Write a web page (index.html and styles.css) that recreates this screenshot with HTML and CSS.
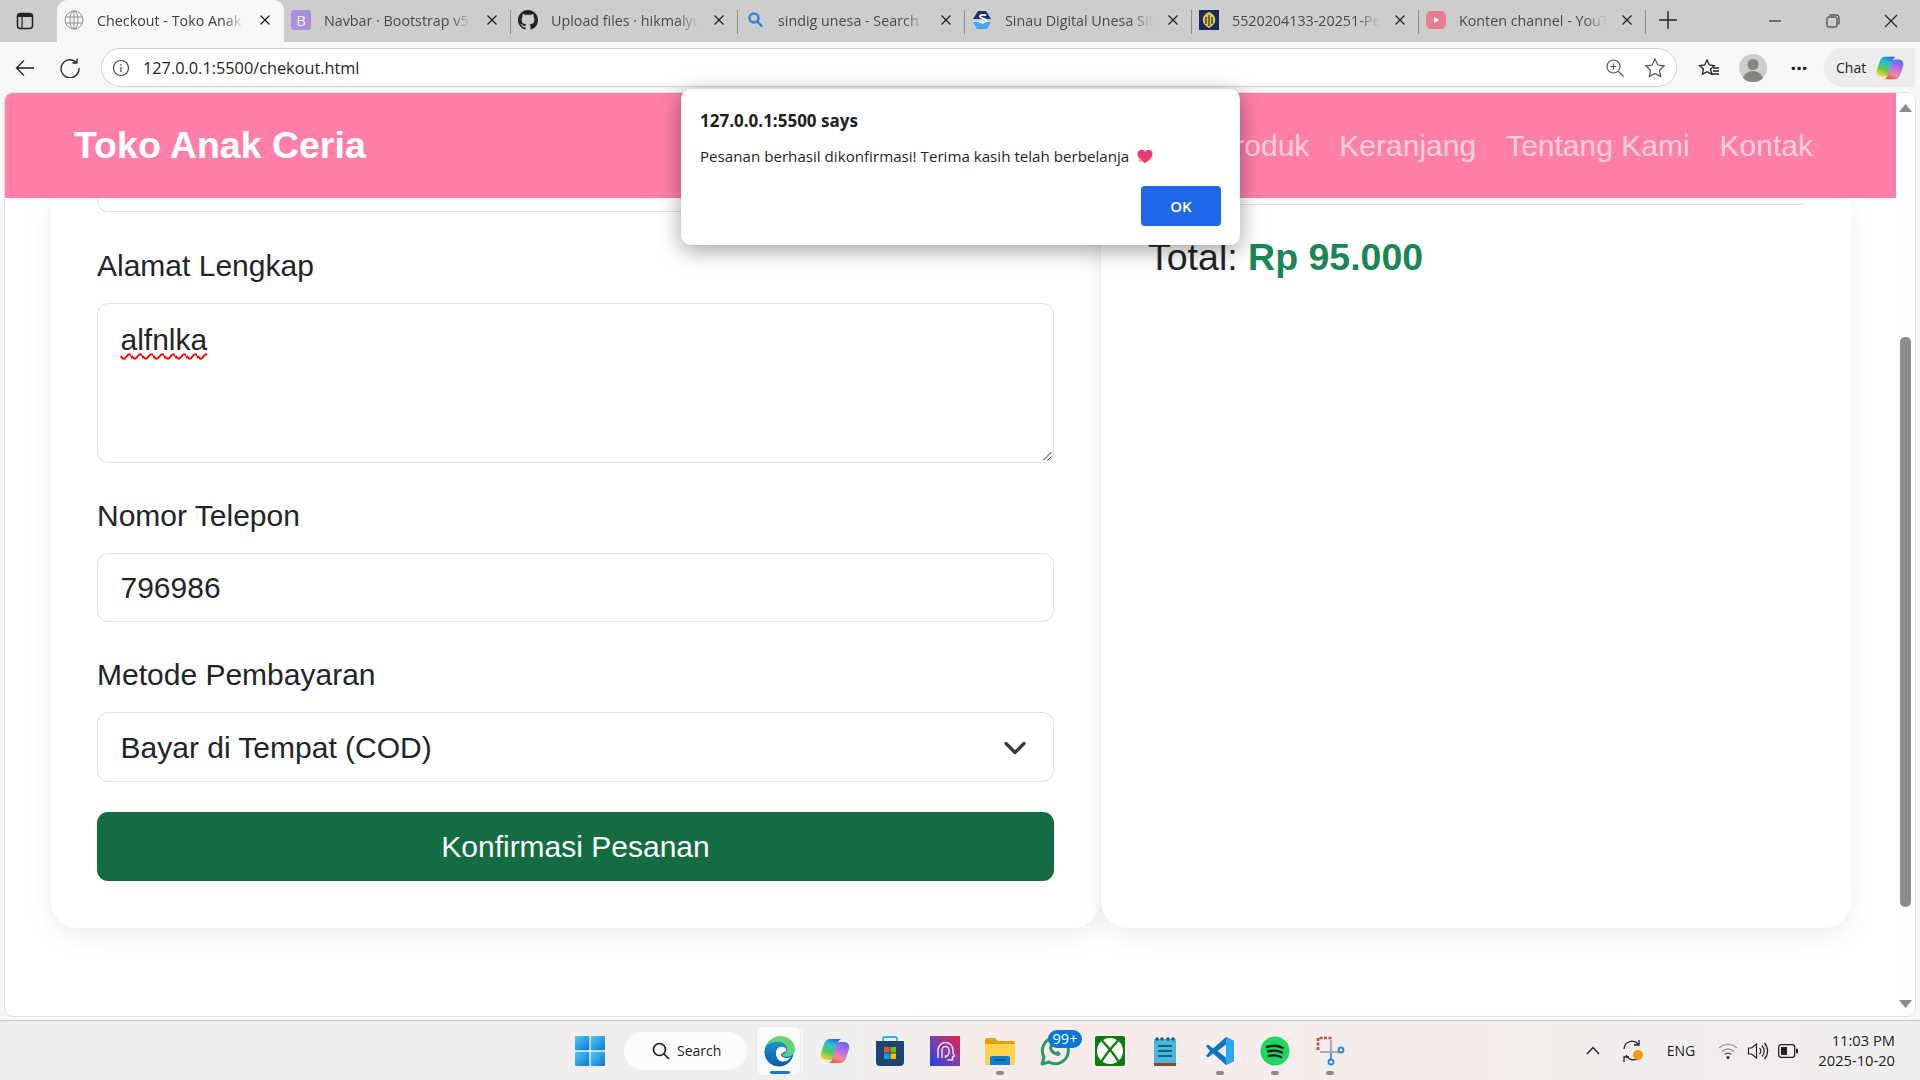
FILE: index.html
```html
<!DOCTYPE html>
<html lang="en">
<head>
  <meta charset="UTF-8">
  <meta name="viewport" content="width=device-width, initial-scale=1.0">
  <title>Checkout - Toko Anak Ceria</title>
  <link rel="stylesheet" href="styles.css">
</head>
<body>

<svg class="defs" width="0" height="0" aria-hidden="true">
  <defs>
    <linearGradient id="copA" x1=".7" y1="0" x2=".3" y2="1">
      <stop offset="0" stop-color="#1f6fe0"/><stop offset=".3" stop-color="#28c0d8"/><stop offset=".65" stop-color="#58c850"/><stop offset="1" stop-color="#f6d23c"/>
    </linearGradient>
    <linearGradient id="copB" x1=".3" y1="1" x2=".7" y2="0">
      <stop offset="0" stop-color="#5a6cf0"/><stop offset=".45" stop-color="#c46ee6"/><stop offset=".75" stop-color="#f08aa0"/><stop offset="1" stop-color="#f0583a"/>
    </linearGradient>
    <linearGradient id="edgeA" x1="0" y1="0" x2="0" y2="1">
      <stop offset="0" stop-color="#1b9de2"/><stop offset="1" stop-color="#0c59a4"/>
    </linearGradient>
    <linearGradient id="edgeB" x1="0" y1="1" x2="1" y2="0">
      <stop offset="0" stop-color="#30c5c0"/><stop offset="1" stop-color="#7ed957"/>
    </linearGradient>
    <linearGradient id="winG" x1="0" y1="0" x2="1" y2="1">
      <stop offset="0" stop-color="#4fc8f8"/><stop offset="1" stop-color="#0a78d4"/>
    </linearGradient>
    <linearGradient id="purpleG" x1="0" y1="1" x2="1" y2="0">
      <stop offset="0" stop-color="#1f45e0"/><stop offset=".55" stop-color="#8a3aa8"/><stop offset="1" stop-color="#f0203a"/>
    </linearGradient>
    <symbol id="copilot" viewBox="0 0 32 32">
      <path d="M11 4C8 4 6 6 5 9L2 18C1 22 3 25 7 25H11C13 25 14 24 14.500 22L18 10C18.700 7 20 5 22 4Z" fill="url(#copA)"/>
      <path d="M11 4C8 4 6 6 5 9L2 18C1 22 3 25 7 25H11C13 25 14 24 14.500 22L18 10C18.700 7 20 5 22 4Z" fill="url(#copB)" transform="rotate(180 16 16)"/>
    </symbol>
    <symbol id="close-x" viewBox="0 0 12 12">
      <path d="M1.500 1.500l9 9M10.500 1.500l-9 9" fill="none" stroke="#222" stroke-width="1.300"/>
    </symbol>
  </defs>
</svg>

<div class="screen">

  <div class="tabstrip">
    <div class="strip-btn">
      <svg width="18" height="18" viewBox="0 0 18 18"><rect x="1.500" y="1.500" width="15" height="15" rx="3" fill="none" stroke="#222" stroke-width="1.500"/><path d="M1.500 5h15V4a2.500 2.500 0 0 0-2.500-2.500H4A2.500 2.500 0 0 0 1.500 4z" fill="#222"/><path d="M6 5v11" stroke="#222" stroke-width="1.200"/></svg>
    </div>

    <div class="tab tab-active">
      <svg class="favicon" viewBox="0 0 20 20" fill="none" stroke="#8f8f8f"><circle cx="10" cy="10" r="9"/><ellipse cx="10" cy="10" rx="4" ry="9"/><path d="M1.500 7h17M1.500 13h17M10 1v18"/></svg>
      <span class="tab-title">Checkout - Toko Anak Ceria</span>
      <svg class="tab-close"><use href="#close-x"/></svg>
    </div>
    <div class="tab tab-sep">
      <span class="favicon fav-bs">B</span>
      <span class="tab-title">Navbar · Bootstrap v5.3</span>
      <svg class="tab-close"><use href="#close-x"/></svg>
    </div>
    <div class="tab tab-sep">
      <svg class="favicon" viewBox="0 0 16 16"><path fill="#1f2328" d="M8 0C3.580 0 0 3.580 0 8c0 3.540 2.290 6.530 5.470 7.590.4.070.55-.17.55-.38 0-.19-.01-.82-.01-1.490-2.010.37-2.530-.49-2.690-.94-.09-.23-.48-.94-.82-1.130-.28-.15-.68-.52-.01-.53.63-.01 1.080.58 1.230.82.72 1.210 1.870.87 2.330.66.07-.52.28-.87.51-1.070-1.780-.2-3.640-.89-3.640-3.950 0-.87.31-1.590.82-2.150-.08-.2-.36-1.020.08-2.120 0 0 .67-.21 2.200.82.64-.18 1.320-.27 2-.27.68 0 1.360.09 2 .27 1.530-1.040 2.200-.82 2.200-.82.44 1.100.16 1.920.08 2.120.51.56.82 1.270.82 2.150 0 3.070-1.870 3.750-3.650 3.950.29.25.54.73.54 1.480 0 1.070-.01 1.930-.01 2.200 0 .21.15.46.55.38A8.013 8.013 0 0 0 16 8c0-4.420-3.580-8-8-8z"/></svg>
      <span class="tab-title">Upload files · hikmalyuliansyah</span>
      <svg class="tab-close"><use href="#close-x"/></svg>
    </div>
    <div class="tab tab-sep">
      <svg class="favicon" viewBox="0 0 20 20" fill="none" stroke="#2a86d6" stroke-width="2.400"><circle cx="9" cy="8" r="4.500"/><path d="M12.500 11.500l4 4.500" stroke-linecap="round"/></svg>
      <span class="tab-title">sindig unesa - Search</span>
      <svg class="tab-close"><use href="#close-x"/></svg>
    </div>
    <div class="tab tab-sep">
      <svg class="favicon" viewBox="0 0 20 20"><path d="M6 1h8l5 8H1z" fill="#1c2f73"/><path d="M1 12h18l-4 7H5z" fill="#4aa3f0"/><path d="M14 5.500c-1-1-6-1-6 1s6 1.500 6 4-5 2.500-7 1" fill="none" stroke="#fff" stroke-width="1.800"/></svg>
      <span class="tab-title">Sinau Digital Unesa SiDIA</span>
      <svg class="tab-close"><use href="#close-x"/></svg>
    </div>
    <div class="tab tab-sep">
      <svg class="favicon" viewBox="0 0 20 20"><rect width="20" height="20" fill="#17295f"/><path d="M10 2c5 2 7 6 6 10-1 3-4 5-6 6-2-1-5-3-6-6C3 8 5 4 10 2z" fill="#e5c53a"/><path d="M10 5v11M7 7v7M13 7v7" stroke="#17295f" stroke-width="1.200"/></svg>
      <span class="tab-title">5520204133-20251-Pemrograman</span>
      <svg class="tab-close"><use href="#close-x"/></svg>
    </div>
    <div class="tab tab-sep">
      <svg class="favicon" viewBox="0 0 20 20"><rect y="1" width="20" height="18" rx="5" fill="#e87d93"/><path d="M8 7l5 3-5 3z" fill="#fff"/></svg>
      <span class="tab-title">Konten channel - YouTube</span>
      <svg class="tab-close"><use href="#close-x"/></svg>
    </div>

    <div class="strip-new">
      <svg width="18" height="18" viewBox="0 0 18 18"><path d="M9 0v18M0 9h18" stroke="#222" stroke-width="1.400"/></svg>
    </div>

    <div class="win-controls">
      <div class="win-btn"><svg width="14" height="14" viewBox="0 0 14 14"><path d="M1 7h12" stroke="#222" stroke-width="1.100"/></svg></div>
      <div class="win-btn"><svg width="14" height="14" viewBox="0 0 14 14" fill="none" stroke="#222"><rect x="1" y="3" width="10" height="10" rx="1.500"/><path d="M3.500 1h7A2.500 2.500 0 0 1 13 3.500v7"/></svg></div>
      <div class="win-btn"><svg width="14" height="14" viewBox="0 0 14 14"><path d="M1 1l12 12M13 1L1 13" stroke="#222" stroke-width="1.100"/></svg></div>
    </div>
  </div>

  <div class="toolbar">
    <div class="tool-btn tool-back">
      <svg width="20" height="18" viewBox="0 0 20 18" fill="none" stroke="#222" stroke-width="1.300"><path d="M19 9H1.500M9 1.500L1.500 9 9 16.500"/></svg>
    </div>
    <div class="tool-btn">
      <svg width="20" height="20" viewBox="0 0 20 20" fill="none" stroke="#222" stroke-width="1.300"><path d="M16.500 4.500A9 9 0 1 0 19 10"/><path d="M17 .5v4.500h-4.500"/></svg>
    </div>

    <div class="addressbar">
      <svg class="addr-info" width="18" height="18" viewBox="0 0 18 18" fill="none" stroke="#444" stroke-width="1.200"><circle cx="9" cy="9" r="7.500"/><path d="M9 8v5M9 5v1.500"/></svg>
      <span class="addr-url">127.0.0.1:5500/chekout.html</span>
      <div class="addr-icons">
        <svg width="20" height="20" viewBox="0 0 20 20" fill="none" stroke="#555" stroke-width="1.200"><circle cx="8.500" cy="8.500" r="6.500"/><path d="M13.500 13.500l5 5M8.500 5.500v6M5.500 8.500h6"/></svg>
        <svg width="22" height="22" viewBox="0 0 22 22" fill="none" stroke="#555" stroke-width="1.200"><path d="M11 2l2.800 6 6.400.8-4.700 4.400 1.200 6.400L11 16.400l-5.700 3.200 1.200-6.400L1.800 8.800 8.200 8z"/></svg>
      </div>
    </div>

    <div class="tool-btn tool-fav">
      <svg width="22" height="20" viewBox="0 0 22 20" fill="none" stroke="#222" stroke-width="1.300"><path d="M9 2l2.300 5 5 .7-3.700 3.400 1 5.200L9 13.700l-4.600 2.600 1-5.200L1.700 7.700l5-.7z"/><path d="M15 10h6M15 13h6M14 16h7"/></svg>
    </div>
    <div class="tool-btn">
      <svg width="28" height="28" viewBox="0 0 28 28"><circle cx="14" cy="14" r="14" fill="#cfcdc9"/><circle cx="14" cy="10.500" r="5.500" fill="#858480"/><path d="M4 24c2-5 6-7 10-7s8 2 10 7c-3 3-6 4-10 4s-7-1-10-4z" fill="#858480"/></svg>
    </div>
    <div class="tool-btn tool-dots">···</div>
    <div class="chat-pill">
      <span>Chat</span>
      <svg width="30" height="30"><use href="#copilot"/></svg>
    </div>
  </div>

  <div class="viewport">
    <div class="page">
      <nav class="navbar">
        <a class="brand">Toko Anak Ceria</a>
        <div class="nav-links">
          <a>Beranda</a>
          <a>Produk</a>
          <a>Keranjang</a>
          <a>Tentang Kami</a>
          <a>Kontak</a>
        </div>
      </nav>

      <div class="checkout">
        <section class="card">
          <div class="field-stub"></div>

          <label class="field-label">Alamat Lengkap</label>
          <div class="field-control field-area">
            <span class="misspelled">alfnlka</span>
            <svg class="resize-grip" width="10" height="10" viewBox="0 0 10 10"><path d="M9.500 1L1 9.500M9.500 5.500L5.500 9.500" stroke="#333" stroke-width="1"/></svg>
          </div>

          <label class="field-label">Nomor Telepon</label>
          <input class="field-control" type="text" value="796986">

          <label class="field-label">Metode Pembayaran</label>
          <div class="select-wrap">
            <select class="field-control">
              <option>Bayar di Tempat (COD)</option>
            </select>
            <svg class="select-arrow" width="22" height="14" viewBox="0 0 22 14" fill="none" stroke="#343a40" stroke-width="3.200" stroke-linecap="round" stroke-linejoin="round"><path d="M2 2.500l9 9 9-9"/></svg>
          </div>

          <button class="btn-confirm">Konfirmasi Pesanan</button>
        </section>

        <aside class="card">
          <div class="summary-rule"></div>
          <h4 class="summary-total">Total: <strong>Rp 95.000</strong></h4>
        </aside>
      </div>
    </div>

    <div class="scrollbar">
      <svg width="13" height="8" viewBox="0 0 13 8"><path d="M6.500 0L13 8H0z" fill="#8a8a8a"/></svg>
      <div class="scroll-thumb"></div>
      <svg class="scroll-down" width="13" height="8" viewBox="0 0 13 8"><path d="M6.500 8L13 0H0z" fill="#8a8a8a"/></svg>
    </div>
  </div>

  <div class="taskbar">
    <div class="win-logo">
      <svg width="30" height="30" viewBox="0 0 30 30" fill="url(#winG)"><rect width="14.300" height="14.300" rx="1"/><rect x="15.700" width="14.300" height="14.300" rx="1"/><rect y="15.700" width="14.300" height="14.300" rx="1"/><rect x="15.700" y="15.700" width="14.300" height="14.300" rx="1"/></svg>
    </div>
    <div class="task-search">
      <svg width="18" height="18" viewBox="0 0 18 18" fill="none" stroke="#1c1c1c" stroke-width="1.700"><circle cx="7.500" cy="7.500" r="6"/><path d="M12 12l5 5"/></svg>
      <span>Search</span>
    </div>

    <div class="task-btn task-active">
      <svg width="32" height="32" viewBox="0 0 32 32">
        <circle cx="15" cy="17" r="14.500" fill="url(#edgeA)"/>
        <path d="M1.500 13C4 5 10 1 16 1c9 0 15 6 15 13 0 5-4 8-8 8-3 0-5-1-5-3 3 0 5-2 5-5 0-4-4-7-9-7-6 0-11 2-13.500 6z" fill="url(#edgeB)"/>
        <path d="M12 18c0-4 3-7 7-6 2 .5 4 2 3 4-1 1.500-4 1-5 3-.5 2 2 4 6 4 2 0 3-.5 4-1-2 3-6 5-9 4.500-4-.5-6-4.500-6-8.500z" fill="#fff"/>
      </svg>
      <span class="task-bar"></span>
    </div>
    <div class="task-btn">
      <svg width="32" height="32"><use href="#copilot"/></svg>
    </div>
    <div class="task-btn">
      <svg width="30" height="30" viewBox="0 0 30 30"><path d="M8 7V3a2 2 0 0 1 2-2h10a2 2 0 0 1 2 2v4" fill="none" stroke="#27b5e8" stroke-width="1.800"/><path d="M1 5h28v21a4 4 0 0 1-4 4H5a4 4 0 0 1-4-4z" fill="#1c4475"/><rect x="9" y="11" width="5.500" height="5.500" fill="#f25022"/><rect x="15.500" y="11" width="5.500" height="5.500" fill="#7fba00"/><rect x="9" y="17.500" width="5.500" height="5.500" fill="#00a4ef"/><rect x="15.500" y="17.500" width="5.500" height="5.500" fill="#ffb900"/></svg>
    </div>
    <div class="task-btn">
      <svg width="30" height="30" viewBox="0 0 30 30"><rect width="30" height="30" fill="url(#purpleG)"/><path d="M8 22v-8a7.500 7.500 0 0 1 15 0v3l1.500 3-2 1v3h-5" fill="none" stroke="#f2dce8" stroke-width="1.500"/><path d="M12 22v-8a3.500 3.500 0 0 1 7 0v3l-1.500 3h-2v2" fill="none" stroke="#f2dce8" stroke-width="1.500"/></svg>
    </div>
    <div class="task-btn">
      <svg width="30" height="28" viewBox="0 0 30 28"><path d="M0 3a2 2 0 0 1 2-2h8l3 3h15a2 2 0 0 1 2 2v6H0z" fill="#e0a106"/><path d="M0 7h30v19a2 2 0 0 1-2 2H2a2 2 0 0 1-2-2z" fill="#ffd24d"/><path d="M5 26a5 5 0 0 1 0-.5V21a2 2 0 0 1 2-2h16a2 2 0 0 1 2 2v7H5z" fill="#0f7fd4"/><path d="M10 23h10" stroke="#083e6d" stroke-width="1.500"/></svg>
      <span class="task-dot"></span>
    </div>
    <div class="task-btn">
      <svg width="32" height="32" viewBox="0 0 32 32" fill="none"><path d="M3 29l2-7a13 13 0 1 1 5 5z" stroke="#2a9a60" stroke-width="3" stroke-linejoin="round"/><path d="M11 10c-2 3 0 7 3 9 3 2 6 3 8 0l-3-3-2 1c-2-1-3-2-4-4l1-2-2-2z" fill="#2a9a60"/></svg>
      <span class="task-badge">99+</span>
    </div>
    <div class="task-btn">
      <svg width="30" height="30" viewBox="0 0 30 30"><rect width="30" height="30" rx="2" fill="#107c10"/><circle cx="15" cy="15" r="13" fill="#fff"/><path d="M7 4.500C10 8 19 17 24 26.500M23 4.500C20 8 11 17 6 26.500" stroke="#107c10" stroke-width="2.400" fill="none"/></svg>
    </div>
    <div class="task-btn">
      <svg width="22" height="30" viewBox="0 0 22 30"><rect y="3" width="22" height="25" rx="1" fill="#4ab6dc"/><rect y="27" width="22" height="3" fill="#8a4b1a"/><circle cx="3" cy="3" r="1.800" fill="#17607f"/><circle cx="8" cy="3" r="1.800" fill="#17607f"/><circle cx="14" cy="3" r="1.800" fill="#17607f"/><circle cx="19" cy="3" r="1.800" fill="#17607f"/><path d="M4 10h14M4 15h14M4 20h14" stroke="#17607f" stroke-width="1.800"/></svg>
    </div>
    <div class="task-btn">
      <svg width="30" height="30" viewBox="0 0 30 30"><path fill-rule="evenodd" d="M21 1L29 5V25L21 29L8 17.500L3 21.500L1 20L5 15L1 10L3 8.500L8 12.500ZM21 8.500L12.500 15L21 21.500Z" fill="#0a74c4"/><path d="M21 1L29 5V25L21 29Z" fill="#2aa7ef"/></svg>
      <span class="task-dot"></span>
    </div>
    <div class="task-btn">
      <svg width="30" height="30" viewBox="0 0 30 30" fill="none"><circle cx="15" cy="15" r="14.500" fill="#1ed760"/><path d="M7 11c6-2 11-1.500 16 1M8 15.500c5-1.500 10-1 14 1M9 20c4-1 8-.8 12 1" stroke="#1a1a1a" stroke-width="2.400" stroke-linecap="round"/></svg>
      <span class="task-dot"></span>
    </div>
    <div class="task-btn">
      <svg width="30" height="32" viewBox="0 0 30 32" fill="none"><path d="M3 15V3h14" stroke="#d8442c" stroke-width="2.600" stroke-dasharray="3 1.500"/><path d="M16 5v13M5 17h19" stroke="#a8aab0" stroke-width="2.200"/><circle cx="26" cy="15" r="2.500" stroke="#1e8fe0" stroke-width="1.800"/><circle cx="16" cy="27" r="2.500" stroke="#1e8fe0" stroke-width="1.800"/><path d="M16 24v-6" stroke="#1e8fe0" stroke-width="1.800"/></svg>
      <span class="task-dot"></span>
    </div>

    <div class="tray">
      <div class="tray-item tray-wide">
        <svg width="14" height="9" viewBox="0 0 14 9" fill="none" stroke="#222" stroke-width="1.500"><path d="M1 8l6-6.500L13 8"/></svg>
      </div>
      <div class="tray-item tray-wide">
        <svg width="22" height="24" viewBox="0 0 22 24" fill="none" stroke="#222" stroke-width="1.300"><path d="M2 10a8 8 0 0 1 14-5M17 1v5h-5M15 20a8 8 0 0 1-11-4M2 23v-5h5"/><circle cx="16" cy="16" r="5" fill="#f59a0c" stroke="none"/></svg>
      </div>
      <div class="tray-item tray-lang">ENG</div>
      <div class="tray-item">
        <svg width="20" height="18" viewBox="0 0 20 18" fill="none" stroke="#999" stroke-width="1.300"><path d="M1 6a13 13 0 0 1 18 0M4 9.500a8.500 8.500 0 0 1 12 0"/><path d="M7 12.500a4.500 4.500 0 0 1 6 0" stroke="#444"/><circle cx="10" cy="15.500" r="1.500" fill="#222" stroke="none"/></svg>
      </div>
      <div class="tray-item">
        <svg width="22" height="20" viewBox="0 0 22 20" fill="none" stroke="#222" stroke-width="1.200"><path d="M1.500 7v6h3l5 4V3l-5 4z"/><path d="M12.500 7a4 4 0 0 1 0 6M15 4.500a8 8 0 0 1 0 11M17.500 2a12 12 0 0 1 0 16"/></svg>
      </div>
      <div class="tray-item">
        <svg width="20" height="14" viewBox="0 0 20 14"><rect x=".7" y=".7" width="16" height="12.600" rx="2.500" fill="none" stroke="#222" stroke-width="1.300"/><rect x="3" y="3" width="6" height="8" fill="#222"/><rect x="18" y="4.500" width="2" height="5" rx="1" fill="#222"/></svg>
      </div>
      <div class="tray-clock">
        <span>11:03 PM</span>
        <span>2025-10-20</span>
      </div>
    </div>
  </div>

  <div class="alert-box">
    <div class="alert-title">127.0.0.1:5500 says</div>
    <div class="alert-msg">
      Pesanan berhasil dikonfirmasi! Terima kasih telah berbelanja
      <svg class="alert-heart" width="16" height="15" viewBox="0 0 18 16"><path d="M9 15.500C3 11.500 .5 8.500.5 5.200.5 2.500 2.500.5 5 .5c1.700 0 3.100.8 4 2.300C9.900 1.300 11.300.5 13 .5c2.500 0 4.500 2 4.500 4.700 0 3.300-2.500 6.300-8.500 10.300z" fill="#ee3a72"/><path d="M3.500 9.500l.8 2 2 .8-2 .8-.8 2-.8-2-2-.8 2-.8z" fill="#f7b733"/></svg>
    </div>
    <div class="alert-actions">
      <button class="alert-ok">OK</button>
    </div>
  </div>

</div>

</body>
</html>
```

FILE: styles.css
```css
* {
  box-sizing: border-box;
}

html, body {
  margin: 0;
  height: 100%;
  overflow: hidden;
}

body {
  font-family: "Open Sans", "Noto Sans", sans-serif;
  background-color: #f7f7f7;
}

.defs {
  position: absolute;
}

.screen {
  position: relative;
  display: flex;
  flex-direction: column;
  width: 1920px;
  height: 1080px;
}

/* browser tabs */
.tabstrip {
  display: flex;
  align-items: stretch;
  flex: 0 0 42px;
  background-color: #cdcdcd;
}

.strip-btn {
  flex: 0 0 57px;
  display: flex;
  align-items: center;
  padding-left: 16px;
}

.tab {
  position: relative;
  flex: 0 0 227px;
  display: flex;
  align-items: center;
  padding-left: 7px;
  padding-bottom: 2px;
  font-size: 14.3px;
  color: #4a4a4a;
}

.tab-active {
  background-color: #f7f7f7;
  border-radius: 10px 10px 0 0;
  color: #3c3c3c;
}

.tab-sep::after {
  content: "";
  position: absolute;
  right: 0;
  top: 10px;
  height: 24px;
  width: 1px;
  background-color: #8c8c8c;
}

.favicon {
  flex: 0 0 20px;
  width: 20px;
  height: 20px;
  margin-right: 13px;
}

.fav-bs {
  display: flex;
  justify-content: center;
  align-items: center;
  border-radius: 3px;
  background-color: #ab8fdc;
  color: #eee6fa;
  font-size: 15px;
}

.tab-title {
  flex: 0 0 148px;
  overflow: hidden;
  white-space: nowrap;
  -webkit-mask-image: linear-gradient(to right, #000 85%, transparent);
  mask-image: linear-gradient(to right, #000 85%, transparent);
}

.tab-close {
  flex: 0 0 12px;
  width: 12px;
  height: 12px;
  margin-left: 14px;
}

.strip-new {
  flex: 0 0 44px;
  display: flex;
  justify-content: center;
  align-items: center;
  padding-bottom: 2px;
}

.win-controls {
  display: flex;
  margin-left: auto;
}

.win-btn {
  width: 58px;
  display: flex;
  justify-content: center;
  align-items: center;
}

/* address bar row */
.toolbar {
  display: flex;
  align-items: center;
  flex: 0 0 51px;
  padding-left: 2px;
}

.tool-btn {
  flex: 0 0 44px;
  display: flex;
  justify-content: center;
  align-items: center;
}

.tool-back {
  flex-basis: 46px;
}

.tool-fav {
  margin-left: 10px;
}

.tool-dots {
  flex-basis: 48px;
  font-size: 20px;
  font-weight: 700;
  color: #222;
}

.addressbar {
  flex: 0 0 1576px;
  height: 39px;
  margin-left: 9px;
  display: flex;
  align-items: center;
  padding-left: 10px;
  background-color: #fff;
  border: 1px solid #cfcfcf;
  border-radius: 20px;
}

.addr-url {
  margin-left: 13px;
  font-size: 16.3px;
  color: #1f1f1f;
}

.addr-icons {
  margin-left: auto;
  margin-right: 10px;
  display: flex;
  align-items: center;
  gap: 19px;
}

.chat-pill {
  flex: 0 0 91px;
  height: 39px;
  margin-left: 1px;
  display: flex;
  align-items: center;
  gap: 9px;
  padding-left: 12px;
  background-color: #ececec;
  border-radius: 20px 0 0 20px;
  font-size: 14px;
  color: #222;
}

/* page area */
.viewport {
  flex: 0 0 923px;
  margin: 0 5px 4px;
  display: flex;
  overflow: hidden;
  background-color: #fff;
  border-radius: 8px;
  box-shadow: 0 0 0 1px #e3e3e3;
}

.page {
  flex: 1;
  overflow: hidden;
  font-family: "Liberation Sans", Arial, sans-serif;
  color: #212529;
}

.navbar {
  position: relative;
  z-index: 1;
  height: 105px;
  display: flex;
  justify-content: space-between;
  align-items: center;
  padding: 0 83px 0 69px;
  background-color: #ff7fa7;
}

.brand {
  font-size: 37.5px;
  font-weight: 700;
  color: #fff;
}

.nav-links {
  display: flex;
  gap: 30px;
  font-size: 30px;
  color: rgba(255, 255, 255, 0.65);
}

.checkout {
  display: grid;
  grid-template-columns: 1049px 750px;
  gap: 1px;
  padding-left: 46px;
}

.card {
  height: 730px;
  padding: 0 46px;
  background-color: #fff;
  border-radius: 0 0 27px 27px;
  box-shadow: 0 7px 27px rgba(0, 0, 0, 0.08);
}

.field-stub {
  height: 14px;
  margin-bottom: 31px;
  border: 1.8px solid #dee2e6;
  border-top: 0;
  border-radius: 0 0 11px 11px;
}

.field-label {
  display: block;
  margin-bottom: 15px;
  font-size: 30px;
  line-height: 45px;
}

.field-control {
  display: block;
  width: 100%;
  height: 69px;
  margin-bottom: 30px;
  padding: 0 22.5px;
  border: 1.8px solid #dee2e6;
  border-radius: 11px;
  background-color: #fff;
  font-family: inherit;
  font-size: 30px;
  color: #212529;
  appearance: none;
}

.field-area {
  position: relative;
  height: 160px;
  padding-top: 13px;
  line-height: 45px;
}

.misspelled {
  text-decoration: underline wavy #f00 1.5px;
  text-underline-offset: 3px;
}

.resize-grip {
  position: absolute;
  right: 1px;
  bottom: 1px;
}

.select-wrap {
  position: relative;
}

.select-wrap .field-control {
  height: 70px;
  margin-bottom: 30px;
}

.select-arrow {
  position: absolute;
  right: 28px;
  top: 29px;
}

.btn-confirm {
  display: block;
  width: 100%;
  height: 69px;
  border: 0;
  border-radius: 11px;
  background-color: #146c43;
  color: #fff;
  font-family: inherit;
  font-size: 30px;
}

.summary-rule {
  height: 7px;
  border-bottom: 1.8px solid #dee2e6;
}

.summary-total {
  margin: 30px 0 0;
  padding-left: 1px;
  font-size: 37.5px;
  font-weight: 400;
  line-height: 45px;
  color: #212529;
}

.summary-total strong {
  color: #198754;
}

.scrollbar {
  flex: 0 0 19px;
  display: flex;
  flex-direction: column;
  align-items: center;
  padding: 11px 0 8px;
  background-color: #fdfdfd;
}

.scroll-thumb {
  width: 11px;
  height: 570px;
  margin-top: 225px;
  border-radius: 5px;
  background-color: #8c8c8c;
}

.scroll-down {
  margin-top: auto;
}

/* windows taskbar */
.taskbar {
  flex: 1;
  display: flex;
  align-items: center;
  padding-left: 575px;
  background: linear-gradient(to right, #efeeed, #f1eeee 45%, #f7ebea 55%, #f0efee);
  border-top: 1px solid #c6c6c6;
  font-family: "Open Sans", "Noto Sans", sans-serif;
  color: #1c1c1c;
}

.win-logo {
  display: flex;
  margin-right: 19px;
}

.task-search {
  flex: 0 0 123px;
  height: 38px;
  margin-right: 5px;
  display: flex;
  align-items: center;
  gap: 7px;
  padding-left: 28px;
  background-color: #fbfbfb;
  border-radius: 19px;
  font-size: 14px;
}

.task-btn {
  position: relative;
  flex: 0 0 55px;
  height: 48px;
  display: flex;
  justify-content: center;
  align-items: center;
}

.task-btn svg {
  position: relative;
}

.task-active::before {
  content: "";
  position: absolute;
  left: 5px;
  top: 0;
  width: 43px;
  height: 48px;
  background-color: #fafafa;
  border-radius: 5px;
  box-shadow: 0 0 0 1px #ececec, 4px 0 0 -1px #f7f7f7;
}

.task-bar {
  position: absolute;
  left: 18px;
  bottom: 1px;
  width: 20px;
  height: 3px;
  border-radius: 2px;
  background-color: #0a78d4;
}

.task-dot {
  position: absolute;
  left: 24px;
  bottom: 0;
  width: 8px;
  height: 4px;
  border-radius: 2px;
  background-color: #8a8a8a;
}

.task-badge {
  position: absolute;
  left: 21px;
  top: 3px;
  width: 34px;
  height: 18px;
  border-radius: 9px;
  background-color: #0a78d4;
  color: #fff;
  font-size: 14.5px;
  line-height: 18px;
  text-align: center;
}

.tray {
  margin-left: auto;
  padding-right: 25px;
  display: flex;
  align-items: center;
}

.tray-item {
  flex: 0 0 30px;
  display: flex;
  justify-content: center;
  align-items: center;
}

.tray-wide {
  flex-basis: 40px;
}

.tray-lang {
  flex-basis: 56px;
  margin-right: 4px;
  font-size: 14px;
}

.tray-clock {
  flex: 0 0 92px;
  display: flex;
  flex-direction: column;
  align-items: flex-end;
  gap: 2px;
  padding-bottom: 2px;
  font-size: 14.7px;
  line-height: 18px;
}

/* javascript alert */
.alert-box {
  position: absolute;
  left: 681px;
  top: 89px;
  z-index: 5;
  width: 559px;
  height: 156px;
  padding: 20px 19px;
  background-color: #fff;
  border-radius: 10px;
  box-shadow: 0 5px 22px rgba(0, 0, 0, 0.38);
  color: #1f1f1f;
}

.alert-title {
  font-size: 17px;
  font-weight: 700;
  line-height: 24px;
}

.alert-msg {
  margin-top: 12px;
  display: flex;
  align-items: center;
  gap: 8px;
  font-size: 15.15px;
  line-height: 22px;
}

.alert-actions {
  display: flex;
  justify-content: flex-end;
  margin-top: 19px;
}

.alert-ok {
  width: 80px;
  height: 40px;
  border: 0;
  border-radius: 4px;
  background-color: #2168e8;
  color: #fff;
  font-family: inherit;
  font-size: 15px;
  font-weight: 600;
}
```
